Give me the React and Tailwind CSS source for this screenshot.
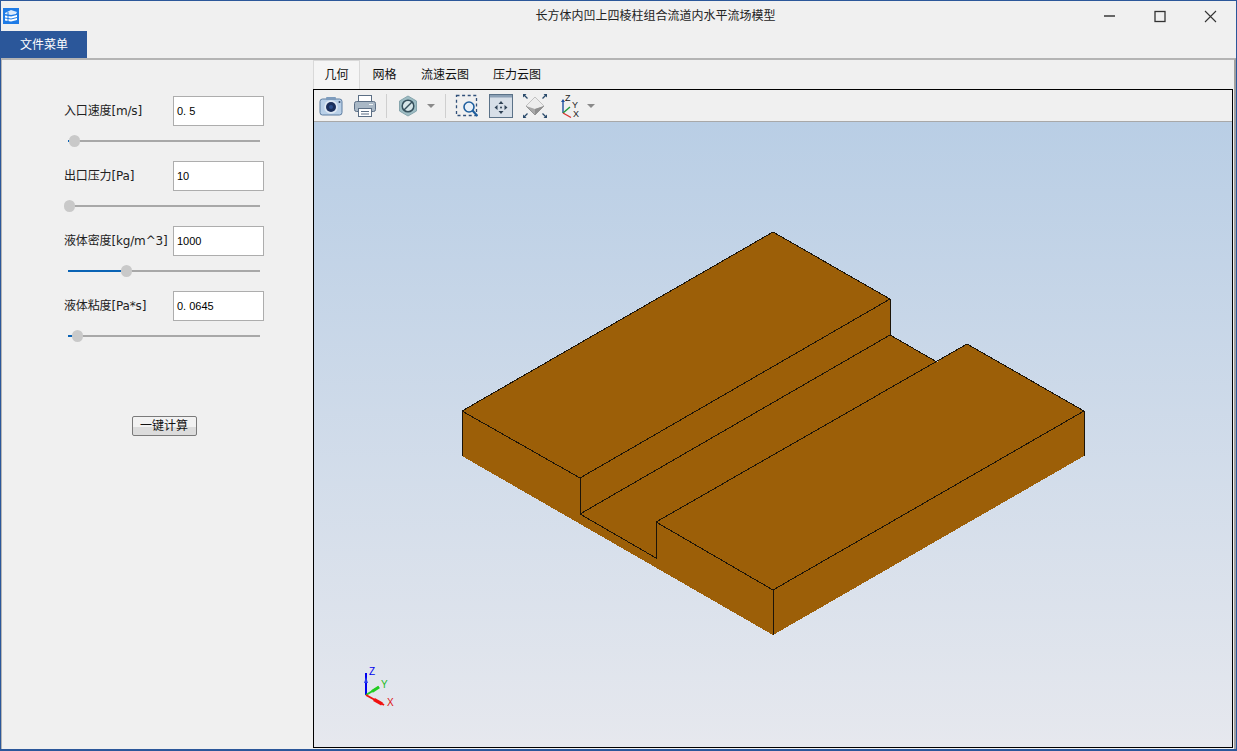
const FONT = '"Liberation Sans", "Noto Sans CJK SC", sans-serif';
const LABEL_FONT = '"DejaVu Sans", "Noto Sans CJK SC", sans-serif';

const params = [
  { label: "入口速度[m/s]", value: "0. 5", percent: 3.1 },
  { label: "出口压力[Pa]", value: "10", percent: 0 },
  { label: "液体密度[kg/m^3]", value: "1000", percent: 30.2 },
  { label: "液体粘度[Pa*s]", value: "0. 0645", percent: 4.2 },
];

const Slider = ({ percent }) => (
  <div className="relative mt-[9px] ml-[4px] h-[12px] w-[192px]">
    <div className="absolute left-0 right-0 top-[5px] h-[2px] bg-[#a8a8a8]" />
    <div
      className="absolute left-0 top-[5px] h-[2px] bg-[#0a63b5]"
      style={{ width: `${percent}%` }}
    />
    <div
      className="absolute top-0 h-[12px] w-[11px] rounded-full bg-[#c9c9c9]"
      style={{ left: `${(percent / 100) * 192 - 4.5}px` }}
    />
  </div>
);

const ParamRow = ({ label, value, percent }) => (
  <div className="mb-[14px]">
    <div className="flex items-center">
      <span
        className="w-[109px] whitespace-nowrap text-[12px] leading-[30px] tracking-[-0.15px] text-[#222]"
        style={{ fontFamily: LABEL_FONT }}
      >
        {label}
      </span>
      <div className="h-[30px] w-[91px] border border-[#adadad] bg-white pl-[3px] text-[11px] leading-[28px] text-black">
        {value}
      </div>
    </div>
    <Slider percent={percent} />
  </div>
);

const WindowButtons = () => (
  <div className="flex items-center">
    <svg width="50" height="30" viewBox="0 0 50 30">
      <path d="M15 15h11" stroke="#666" strokeWidth="2" />
    </svg>
    <svg width="50" height="30" viewBox="0 0 50 30">
      <rect x="16" y="10.5" width="10" height="10" fill="none" stroke="#333" strokeWidth="1.3" />
    </svg>
    <svg width="47" height="30" viewBox="0 0 47 30">
      <path d="M16 10l11 11M27 10l-11 11" stroke="#333" strokeWidth="1.1" />
    </svg>
  </div>
);

const AppIcon = () => (
  <svg width="16" height="16" viewBox="0 0 16 16">
    <rect width="16" height="16" fill="#1e7be6" />
    <path d="M2 5l6-3 6 2-1 2-5 1-6-1z" fill="#dceafb" />
    <path d="M2 7.500l6 1 6-1.500v2l-6 1.500-6-1z" fill="#fff" />
    <path d="M2 10.500l6 1 6-1.500v2l-6 1.500-6-1z" fill="#fff" />
    <path d="M5 4v10" stroke="#1e7be6" strokeWidth="1" />
  </svg>
);

const Caret = ({ className }) => (
  <svg width="10" height="6" viewBox="0 0 10 6" className={className}>
    <path d="M1 1h8L5 5z" fill="#8a8a8a" />
  </svg>
);

const Sep = ({ className }) => <div className={`h-[24px] w-px bg-[#cfcfcf] ${className}`} />;

const CameraIcon = () => (
  <svg width="24" height="22" viewBox="0 0 24 22">
    <rect x="1" y="4" width="22" height="16" rx="2.500" fill="#b9d0e8" stroke="#5c7ca0" />
    <rect x="7" y="2" width="10" height="3" rx="1" fill="#7e9cbd" />
    <circle cx="12" cy="12" r="6.800" fill="#dfe9f4" />
    <circle cx="12" cy="12" r="5" fill="#1b2f5c" />
    <circle cx="12" cy="12" r="2" fill="#2c4f8c" />
    <circle cx="20.500" cy="7" r="1" fill="#33486a" />
  </svg>
);

const PrintIcon = () => (
  <svg width="24" height="24" viewBox="0 0 24 24">
    <rect x="5.500" y="1.500" width="13" height="7" fill="#fff" stroke="#5c6f85" />
    <rect x="1.500" y="7.500" width="21" height="10" rx="2" fill="#a9b8c6" stroke="#5c6f85" />
    <rect x="5.500" y="14.500" width="13" height="8" fill="#fff" stroke="#5c6f85" />
    <path d="M8 17.500h8M8 20h8" stroke="#5c6f85" />
    <path d="M16 10.500h4" stroke="#eef2f5" />
  </svg>
);

const HexIcon = () => (
  <svg width="20" height="22" viewBox="0 0 20 22">
    <path d="M10 1l8.500 5v10L10 21l-8.500-5V6z" fill="#9dbcc3" stroke="#86a5ad" />
    <circle cx="10" cy="11" r="5.800" fill="#d6e5e8" stroke="#35505c" strokeWidth="1.500" />
    <path d="M6 15l8-8" stroke="#35505c" strokeWidth="1.500" />
  </svg>
);

const ZoomBoxIcon = () => (
  <svg width="24" height="24" viewBox="0 0 24 24">
    <rect x="2.500" y="1.500" width="20" height="20" fill="none" stroke="#31507a" strokeWidth="1.300" strokeDasharray="3 2.600" />
    <circle cx="15" cy="13" r="5" fill="#e8f0f8" stroke="#1f5f9e" strokeWidth="1.600" />
    <path d="M18.500 16.500l5 5.500" stroke="#1f5f9e" strokeWidth="2.200" />
  </svg>
);

const FitIcon = () => (
  <svg width="24" height="24" viewBox="0 0 24 24">
    <rect x="0.500" y="0.500" width="23" height="23" fill="#d7dfe8" stroke="#5b7288" />
    <rect x="1" y="1" width="22" height="2.500" fill="#8ba0b5" />
    <path d="M12 7l-2.500 3h5zM12 20l-2.500-3h5zM5.500 13.500l3-2.500v5zM18.500 13.500l-3-2.500v5z" fill="#2f4256" />
    <circle cx="12" cy="13.500" r="1" fill="#2f4256" />
  </svg>
);

const ResetIcon = () => (
  <svg width="24" height="24" viewBox="0 0 24 24">
    <path d="M12 3l9 9-9 9-9-9z" fill="#a9a9a9" stroke="#6d6d6d" strokeWidth="0.600" />
    <path d="M12 3l9 9-9 3-9-3z" fill="#ededed" />
    <path d="M12 15l9-3-9 9z" fill="#8f8f8f" />
    <path d="M0 0h3.500L0 3.500zM24 0h-3.500L24 3.500zM0 24h3.500L0 20.500zM24 24h-3.500L24 20.500z" fill="#2a4a6b" />
    <path d="M1 1l3.500 3.500M23 1l-3.500 3.500M1 23l3.500-3.500M23 23l-3.500-3.500" stroke="#2a4a6b" strokeWidth="1.300" />
  </svg>
);

const AxesIcon = () => (
  <svg width="22" height="26" viewBox="0 0 22 26" fontFamily={FONT} fontSize="9">
    <g transform="translate(0 1)">
      <path d="M4 19V7" stroke="#1d4f9f" strokeWidth="1.400" />
      <path d="M4 5l2 3H2z" fill="#1d4f9f" />
      <path d="M4 19l7-6" stroke="#1f9a3c" strokeWidth="1.400" />
      <path d="M4 19l8 4.500" stroke="#d8322f" strokeWidth="1.400" />
      <text x="6" y="7" fill="#222">Z</text>
      <text x="13" y="14" fill="#222">Y</text>
      <text x="14" y="23" fill="#222">X</text>
    </g>
  </svg>
);

// CAD model, pixel coords are relative to the viewport panel
const Model = () => {
  const ox = 314;
  const oy = 122;
  const pt = (x, y) => `${x - ox},${y - oy}`;
  const outline = [
    [773, 232], [890, 299], [890, 335], [937, 362], [967, 344], [1084, 411],
    [1084, 456], [773, 635], [462, 456], [462, 411],
  ];
  const edges = [
    [[462, 411], [773, 232], [890, 299], [580, 478], [462, 411]],
    [[890, 299], [890, 335], [580, 514], [580, 478]],
    [[890, 335], [937, 362]],
    [[580, 514], [656, 558], [656, 522], [967, 344], [1084, 411], [1084, 456]],
    [[656, 522], [773, 590], [1084, 411]],
    [[773, 590], [773, 635]],
    [[462, 411], [462, 456]],
  ];
  return (
    <svg className="absolute inset-0" width="919" height="625" viewBox="0 0 919 625" shapeRendering="crispEdges">
      <polygon points={outline.map(([x, y]) => pt(x, y)).join(" ")} fill="#9c5f08" />
      {edges.map((line, i) => (
        <polyline
          key={i}
          points={line.map(([x, y]) => pt(x, y)).join(" ")}
          fill="none"
          stroke="#1c1408"
          strokeWidth="1"
        />
      ))}
    </svg>
  );
};

const CornerAxes = () => (
  <svg
    className="absolute left-[40px] bottom-[33px]"
    width="50"
    height="50"
    viewBox="0 0 50 50"
    fontFamily={FONT}
    fontSize="10"
  >
    <path d="M12 31V9" stroke="#0000ee" strokeWidth="2" />
    <path d="M12 13l2 6h-4z" fill="#2a3cf0" />
    <path d="M12 31l13-8" stroke="#22cc22" strokeWidth="2" />
    <path d="M18 27.500l7-4.500" stroke="#22cc22" strokeWidth="3" />
    <path d="M12 31l18 10" stroke="#f01010" strokeWidth="2" />
    <path d="M20 35.500l8 4.500" stroke="#f01010" strokeWidth="3.500" />
    <text x="15" y="11" fill="#0000ee">Z</text>
    <text x="27" y="24" fill="#22bb22">Y</text>
    <text x="33" y="42" fill="#dd1111">X</text>
  </svg>
);

const App = () => {
  return (
    <div
      className="flex h-[751px] w-[1237px] flex-col overflow-hidden border border-[#2b579a] border-b-2 bg-[#f0f0f0]"
      style={{ fontFamily: FONT }}
    >
      {/* Title bar */}
      <div className="flex h-[30px] items-center pl-[2px]">
        <AppIcon />
        <div className="flex-1 pl-[203px] text-center text-[12px] text-[#222]">长方体内凹上四棱柱组合流道内水平流场模型</div>
        <WindowButtons />
      </div>

      {/* Menu */}
      <div className="flex h-[27px] shrink-0">
        <div className="flex w-[86px] items-center justify-center bg-[#2b579a] text-[12px] text-white">文件菜单</div>
      </div>

      <div className="flex min-h-0 flex-1 border-l border-t-2 border-r-2 border-[#b4b4b4] border-r-[#a0a0a0]">
        {/* Left parameter panel */}
        <div className="w-[311px] shrink-0 pl-[62px] pt-[36px]">
          {params.map((p) => (
            <ParamRow key={p.label} {...p} />
          ))}
          <div className="mt-[74px] flex w-[200px] justify-center">
            <button className="h-[20px] w-[65px] rounded-[2px] border border-[#7a7a7a] bg-[linear-gradient(#f2f2f2_55%,#dcdcdc_55%)] text-[12px] leading-[17px] text-[#111]">
              一键计算
            </button>
          </div>
        </div>

        {/* Right tabs + viewer */}
        <div className="flex min-w-0 flex-1 flex-col pb-[1px] pr-[1px]">
          <div className="flex h-[29px] shrink-0 text-[12px] text-[#111]">
            <div className="flex w-[47px] items-center justify-center border border-b-0 border-[#d9d9d9] bg-[#f5f5f5]">几何</div>
            <div className="flex w-[49px] items-center justify-center">网格</div>
            <div className="flex w-[72px] items-center justify-center">流速云图</div>
            <div className="flex w-[72px] items-center justify-center">压力云图</div>
          </div>
          <div className="flex min-h-0 flex-1 flex-col border border-black">
            <div className="flex h-[32px] shrink-0 items-center border-b border-[#a8a8a8] bg-[#f0f0f0] pl-[5px]">
              <CameraIcon />
              <div className="ml-[10px]"><PrintIcon /></div>
              <Sep className="ml-[9px]" />
              <div className="ml-[11px]"><HexIcon /></div>
              <Caret className="ml-[8px]" />
              <Sep className="ml-[9px]" />
              <div className="ml-[8px]"><ZoomBoxIcon /></div>
              <div className="ml-[11px]"><FitIcon /></div>
              <div className="ml-[10px]"><ResetIcon /></div>
              <div className="ml-[12px]"><AxesIcon /></div>
              <Caret className="ml-[5px]" />
            </div>
            <div className="relative min-h-0 flex-1 bg-[linear-gradient(#b9cee5,#e6e8ee)]">
              <Model />
              <CornerAxes />
            </div>
          </div>
        </div>
      </div>
    </div>
  );
};

export default App;
